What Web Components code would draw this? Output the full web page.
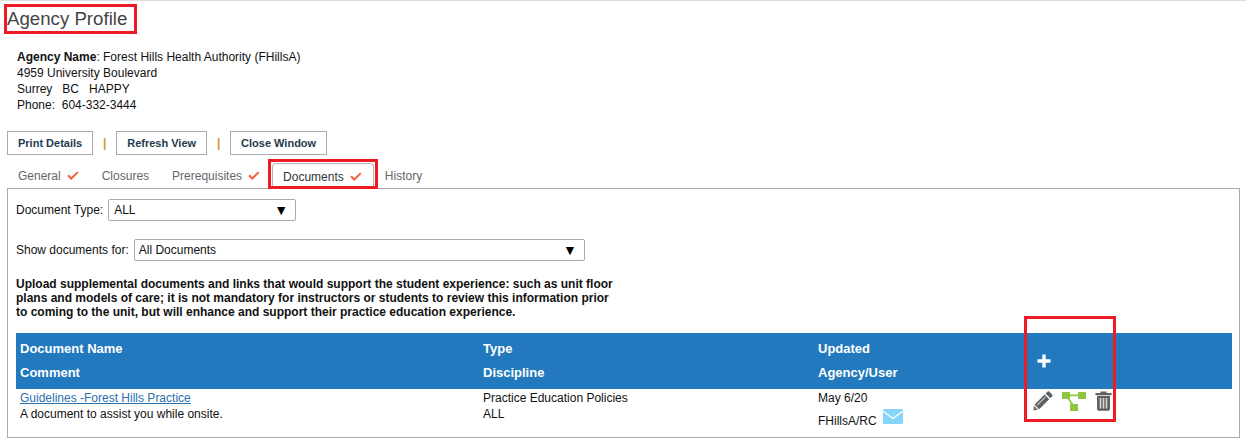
<!DOCTYPE html>
<html>
<head>
<meta charset="utf-8">
<title>Agency Profile</title>
<style>
  html, body { margin: 0; padding: 0; background: #fff; }
  body { font: 12px/16px "Liberation Sans", Arial, sans-serif; color: #111; width: 1246px; height: 446px; overflow: hidden; position: relative; }
</style>
</head>
<body>
<agency-page></agency-page>

<template id="btn-tpl">
  <style>
    :host { display: block; box-sizing: border-box; height: 24px; padding: 0 10px; border: 1px solid #aaa; font-size: 11px; font-weight: bold; line-height: 22px; color: #1f3b4d; white-space: nowrap; }
  </style>
  <slot></slot>
</template>

<template id="tab-tpl">
  <style>
    :host { display: flex; align-items: center; gap: 6px; box-sizing: border-box; height: 26px; margin-bottom: -1px; padding: 0 12px 0 11px; color: #666; white-space: nowrap; }
    :host([active]) { color: #333; background: #fff; border: 1px solid #b5b5b5; border-bottom: 0; border-radius: 4px 4px 0 0; padding: 0 11px 0 10px; position: relative; }
    svg { display: none; width: 12px; height: 10px; }
    :host([checked]) svg { display: block; }
  </style>
  <slot></slot>
  <svg viewBox="0 0 12 10"><path d="M1 4.3 L4.2 7.5 L10.8 1.1" fill="none" stroke="#f4613f" stroke-width="2"/></svg>
</template>

<template id="select-tpl">
  <style>
    :host { display: flex; align-items: center; justify-content: space-between; box-sizing: border-box; height: 22px; padding: 0 7px 0 5px; background: #fff; border: 1px solid #aaa; border-radius: 2px; color: #111; }
    i { font-style: normal; font-size: 14px; color: #000; }
  </style>
  <span><slot></slot></span><i>▼</i>
</template>

<template id="mark-tpl">
  <style>
    :host { display: block; position: absolute; box-sizing: border-box; border: 3px solid #ed1c24; pointer-events: none; }
  </style>
</template>

<template id="grid-tpl">
  <style>
    :host { display: block; }
    .row { display: grid; grid-template-columns: 463px 335px 206px 1fr; }
    .head { background: #2279bd; color: #fff; font-weight: bold; font-size: 13px; line-height: 24px; height: 56px; padding-top: 4px; box-sizing: border-box; }
    .head > div, .body > div { padding-left: 4px; }
    .plus { display: flex; align-items: center; height: 48px; padding-left: 17px !important; }
    .body { line-height: 16px; padding-top: 1px; height: 46px; box-sizing: border-box; }
    a { color: #2a6fae; text-decoration: underline; }
    .user { display: flex; align-items: flex-start; gap: 6px; margin-top: 7px; }
    .user svg { margin-top: -4px; }
    .tools { display: flex; align-items: center; gap: 9px; height: 20px; padding-left: 13px !important; margin-top: 1px; }
    svg { display: block; }
  </style>
  <div class="row head">
    <div>Document Name<br>Comment</div>
    <div>Type<br>Discipline</div>
    <div>Updated<br>Agency/User</div>
    <div class="plus">
      <svg width="14" height="14" viewBox="0 0 14 14"><path d="M7 0.5 V13.5 M0.5 7 H13.5" stroke="#fff" stroke-width="3.4"/></svg>
    </div>
  </div>
  <div class="row body">
    <div><a>Guidelines -Forest Hills Practice</a><br>A document to assist you while onsite.</div>
    <div>Practice Education Policies<br>ALL</div>
    <div>May 6/20
      <div class="user">FHillsA/RC
        <svg width="20" height="15" viewBox="0 0 20 15"><rect width="20" height="15" rx="1.5" fill="#87d4fb"/><path d="M0.5 2.5 L10 9.5 L19.5 2.5" fill="none" stroke="#fff" stroke-width="1.4"/></svg>
      </div>
    </div>
    <div class="tools">
      <svg width="20" height="20" viewBox="0 0 20 20"><path d="M14.6 0.6 Q15.4 0 16.2 0.6 L19.2 3.6 Q19.8 4.4 19.2 5.2 L17.2 7.2 L12.6 2.6 Z" fill="#56646e"/><path d="M11.6 3.6 L16.2 8.2 L6.2 18.2 L1.6 13.6 Z" fill="#5f6062"/><path d="M1.1 14.6 L5.2 18.7 L0.3 19.6 Z" fill="#8a7460"/><path d="M4.2 14 L12.6 5.8" stroke="#e8e8e8" stroke-width="1.1" opacity=".75"/></svg>
      <svg width="24" height="20" viewBox="0 0 24 20"><g fill="#8dc63f"><rect x="0" y="1" width="8" height="7"/><rect x="16" y="1" width="8" height="7"/><rect x="8" y="13" width="8" height="7"/></g><path d="M7 4.4 H17 M6 7 L11 14" stroke="#8dc63f" stroke-width="1.8" fill="none"/></svg>
      <svg width="17" height="20" viewBox="0 0 17 20"><path d="M5.5 0.4 H11.5 V2 H16.5 V4.2 H0.5 V2 H5.5 Z" fill="#5f6062"/><path d="M2 5 H15 V18 Q15 19.8 13.2 19.8 H3.8 Q2 19.8 2 18 Z" fill="#5f6062"/><path d="M5.5 7 V17.6 M8.5 7 V17.6 M11.5 7 V17.6" stroke="#ddd6cc" stroke-width="1.6"/></svg>
    </div>
  </div>
</template>

<template id="page-tpl">
  <style>
    :host { display: block; border-top: 1px solid #ddd; padding: 0 6px 0 7px; height: 445px; box-sizing: border-box; position: relative; }
    h1 { margin: 0; font-size: 18.67px; font-weight: normal; line-height: 22px; padding-top: 7px; color: #444; }
    .info { padding: 19px 0 0 10px; color: #111; }
    .actions { display: flex; align-items: center; margin-top: 18px; }
    .sep { width: 23px; text-align: center; color: #d49a1c; font-weight: bold; font-size: 12px; }
    .tabs { display: flex; align-items: flex-end; height: 33px; }
    .panel { border: 1px solid #aaa; height: 250px; box-sizing: border-box; padding: 10px 7px 0 8px; }
    .field { display: flex; align-items: center; gap: 5px; height: 22px; }
    .field + .field { margin-top: 18px; }
    p { margin: 16px 0 14px; font-weight: bold; line-height: 14px; width: 600px; }
  </style>
  <h1>Agency Profile</h1>
  <div class="info">
    <b>Agency Name</b>: Forest Hills Health Authority (FHillsA)<br>
    4959 University Boulevard<br>
    Surrey&nbsp;&nbsp; BC&nbsp;&nbsp; HAPPY<br>
    Phone:&nbsp; 604-332-3444
  </div>
  <div class="actions">
    <agency-button>Print Details</agency-button>
    <span class="sep">|</span>
    <agency-button>Refresh View</agency-button>
    <span class="sep">|</span>
    <agency-button>Close Window</agency-button>
  </div>
  <div class="tabs">
    <agency-tab checked>General</agency-tab>
    <agency-tab>Closures</agency-tab>
    <agency-tab checked>Prerequisites</agency-tab>
    <agency-tab checked active>Documents</agency-tab>
    <agency-tab>History</agency-tab>
  </div>
  <div class="panel">
    <div class="field">Document Type: <agency-select style="width:188px">ALL</agency-select></div>
    <div class="field">Show documents for: <agency-select style="width:451px;padding-left:4px">All Documents</agency-select></div>
    <p>Upload supplemental documents and links that would support the student experience: such as unit floor plans and models of care; it is not mandatory for instructors or students to review this information prior to coming to the unit, but will enhance and support their practice education experience.</p>
    <agency-grid></agency-grid>
  </div>
  <agency-mark style="left:4px;top:3px;width:133px;height:30px"></agency-mark>
  <agency-mark style="left:268px;top:158px;width:110px;height:30px"></agency-mark>
  <agency-mark style="left:1024px;top:315px;width:92px;height:106px"></agency-mark>
</template>

<script>
  function define(name, tplId) {
    customElements.define(name, class extends HTMLElement {
      constructor() {
        super();
        this.attachShadow({ mode: "open" }).appendChild(document.getElementById(tplId).content.cloneNode(true));
      }
    });
  }
  define("agency-button", "btn-tpl");
  define("agency-tab", "tab-tpl");
  define("agency-select", "select-tpl");
  define("agency-mark", "mark-tpl");
  define("agency-grid", "grid-tpl");
  define("agency-page", "page-tpl");
</script>
</body>
</html>
